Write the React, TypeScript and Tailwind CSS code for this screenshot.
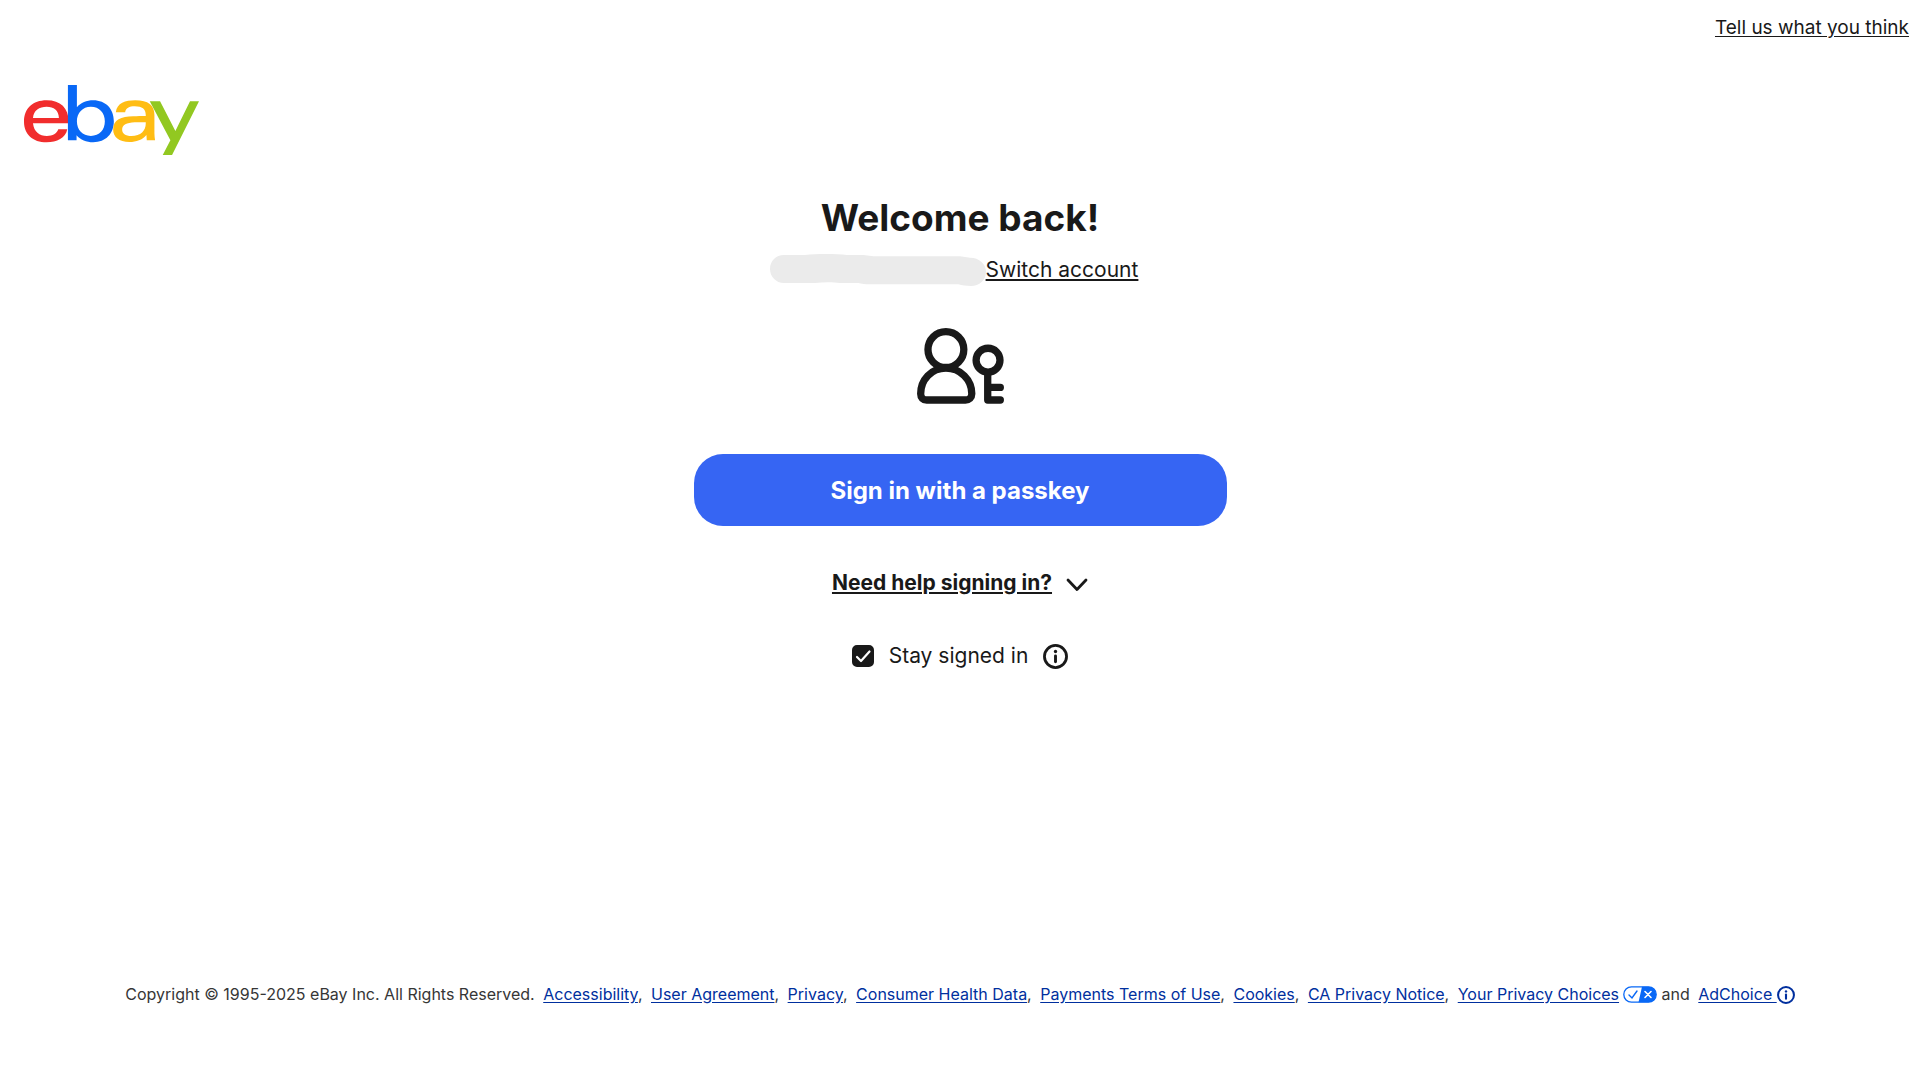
import React, { useState } from 'react';

const legalLinks = [
  'Accessibility',
  'User Agreement',
  'Privacy',
  'Consumer Health Data',
  'Payments Terms of Use',
  'Cookies',
  'CA Privacy Notice',
];

const EbayLogo: React.FC = () => (
  <svg viewBox="72 75 526 210" className="h-[70px] w-[175px]" role="img" aria-label="eBay">
    <path
      fill="#F12D2D"
      fillRule="evenodd"
      d="M206 190H99C102 216 118 228 141 228C158 228 171 221 175 208H202C197 235 171 247 140 247C98 247 72 222 72 185C72 146 98 121 140 121C182 121 206 145 206 184ZM177 174C176 150 162 140 140 140C118 140 101 150 99 174Z"
    />
    <path
      fill="#0968F6"
      fillRule="evenodd"
      d="M204 75H231V142C243 128 260 121 280 121C318 121 342 147 342 184C342 221 318 247 280 247C259 247 242 240 230 226V241H204ZM231 184C231 210 248 228 273 228C299 228 315 210 315 184C315 159 299 140 273 140C248 140 231 159 231 184Z"
    />
    <path
      fill="#FFBD14"
      fillRule="evenodd"
      d="M438 168V165C438 147 427 139 405 139C388 139 378 145 376 157H348C351 129 377 121 406 121C446 121 464 136 464 165V220C464 228 465 235 466 241H441L440 225C427 240 410 246 389 246C357 246 340 230 340 209C340 179 364 170 400 169C412 168 426 168 438 168ZM438 187C427 187 415 187 405 187C380 188 367 195 367 209C367 220 376 228 395 228C423 228 438 213 438 190Z"
    />
    <path fill="#92C821" d="M450 124H481L527 213L571 124H598L517 285H489L512 241Z" />
  </svg>
);

const PasskeyIcon: React.FC = () => (
  <svg
    viewBox="51 55 262 229"
    className="h-[76px] w-[87px]"
    fill="none"
    stroke="#191919"
    strokeWidth={22}
    strokeLinecap="round"
    strokeLinejoin="round"
    aria-hidden="true"
  >
    <circle cx="138" cy="120" r="54" />
    <path d="M138 176C94 176 62 211 62 253C62 265 69 272 80 272H197C208 272 216 265 216 253C216 211 182 176 138 176Z" />
    <circle cx="265" cy="152" r="36" />
    <path d="M264 190V272H302M264 234H302" />
  </svg>
);

const InfoIcon: React.FC<{ className: string }> = ({ className }) => (
  <svg viewBox="0 0 24 24" className={className} fill="none" stroke="currentColor" aria-hidden="true">
    <circle cx="12" cy="12" r="10.6" strokeWidth={2.7} />
    <path d="M12 11.4V17" strokeWidth={2.8} strokeLinecap="round" />
    <circle cx="12" cy="7.2" r="1.6" fill="currentColor" stroke="none" />
  </svg>
);

const PrivacyChoicesIcon: React.FC = () => (
  <svg viewBox="0 0 34 17" className="ml-1 inline-block h-[17px] w-[34px] align-[-3px]" fill="none" aria-hidden="true">
    <rect x="0.8" y="0.8" width="32.4" height="15.4" rx="7.7" fill="#fff" stroke="#0968F6" strokeWidth={1.3} />
    <path d="M19 0.8H25.5A7.7 7.7 0 0 1 25.5 16.2H15.5Z" fill="#0968F6" />
    <path d="M6 9L9 12L14 5" stroke="#0968F6" strokeWidth={1.4} strokeLinecap="round" />
    <path d="M22 5.5L28 11.5M28 5.5L22 11.5" stroke="#fff" strokeWidth={1.6} strokeLinecap="round" />
  </svg>
);

const App: React.FC = () => {
  const [staySignedIn, setStaySignedIn] = useState(true);

  return (
    <div className="flex min-h-screen flex-col bg-white font-['Inter',sans-serif] text-[#191919]">
      <header>
        <div className="flex justify-end px-[11px] pt-[13px]">
          <a href="#feedback" className="text-[19px] leading-[30px] underline underline-offset-2">
            Tell us what you think
          </a>
        </div>
        <a href="#home" className="ml-6 mt-[42px] block w-fit">
          <EbayLogo />
        </a>
      </header>

      <main className="flex flex-col items-center px-4 pt-10">
        <h1 className="text-[37px] font-bold leading-[46px]">Welcome back!</h1>

        {/* Account name is hidden */}
        <div className="mt-[13px] flex items-center pr-3">
          <svg viewBox="90 222 648 96" className="h-8 w-[216px]" aria-hidden="true">
            <path
              fill="#EBEBEB"
              d="M132 225H195C230 221 290 221 320 225H370L400 229H660L690 233C718 233 738 252 738 275C738 300 718 318 693 318C680 318 665 316 655 313H390C375 313 365 311 355 309H300C280 306 250 306 225 309H132C108 309 90 290 90 267C90 243 108 225 132 225Z"
            />
          </svg>
          <a href="#switch" className="text-[21px] leading-8 underline underline-offset-2">
            Switch account
          </a>
        </div>

        <div className="mt-[42px]">
          <PasskeyIcon />
        </div>

        <button
          type="button"
          className="mt-[50px] h-[72px] w-full max-w-[533px] cursor-pointer rounded-[29px] bg-[#3665F3] pt-[2px] text-[24px] font-bold text-white"
        >
          Sign in with a passkey
        </button>

        <button type="button" className="mt-[41px] flex cursor-pointer items-center gap-[14px] text-[21px] font-bold leading-8">
          <span className="underline underline-offset-2">Need help signing in?</span>
          <svg viewBox="0 0 22 14" className="mt-1 h-[14px] w-[22px]" fill="none" stroke="#191919" strokeWidth={2.8} strokeLinecap="round" strokeLinejoin="round" aria-hidden="true">
            <path d="M2 2L11 11.5L20 2" />
          </svg>
        </button>

        <div className="mt-[41px] flex items-center">
          <div className="grid place-items-center">
            <input
              id="stay-signed-in"
              type="checkbox"
              checked={staySignedIn}
              onChange={(e) => setStaySignedIn(e.target.checked)}
              className="peer col-start-1 row-start-1 h-[22px] w-[22px] appearance-none rounded-[5px] border-2 border-[#191919] checked:bg-[#191919]"
            />
            <svg viewBox="0 0 22 22" className="pointer-events-none invisible col-start-1 row-start-1 h-[22px] w-[22px] peer-checked:visible" fill="none" stroke="#fff" strokeWidth={2.2} strokeLinecap="round" strokeLinejoin="round" aria-hidden="true">
              <path d="M5 12L9 16L17.5 6.5" />
            </svg>
          </div>
          <label htmlFor="stay-signed-in" className="ml-[15px] text-[21px] leading-8">
            Stay signed in
          </label>
          <button type="button" aria-label="More about staying signed in" className="ml-[15px] cursor-pointer">
            <InfoIcon className="h-[25px] w-[25px]" />
          </button>
        </div>
      </main>

      <footer className="mt-auto px-4 pb-[73px] pt-10 text-center text-[16px] leading-6 text-[#363636]">
        Copyright © 1995-2025 eBay Inc. All Rights Reserved.{' '}
        {legalLinks.map((link) => (
          <React.Fragment key={link}>
            <a href="#legal" className="ml-1 text-[#002F9E] underline underline-offset-2">
              {link}
            </a>
            ,{' '}
          </React.Fragment>
        ))}
        <a href="#choices" className="ml-1 text-[#002F9E] underline underline-offset-2">
          Your Privacy Choices
        </a>
        <PrivacyChoicesIcon /> and{' '}
        <a href="#adchoice" className="ml-1 text-[#002F9E] underline underline-offset-2">
          AdChoice <InfoIcon className="inline-block h-[18px] w-[18px] align-[-4px]" />
        </a>
      </footer>
    </div>
  );
};

export default App;
